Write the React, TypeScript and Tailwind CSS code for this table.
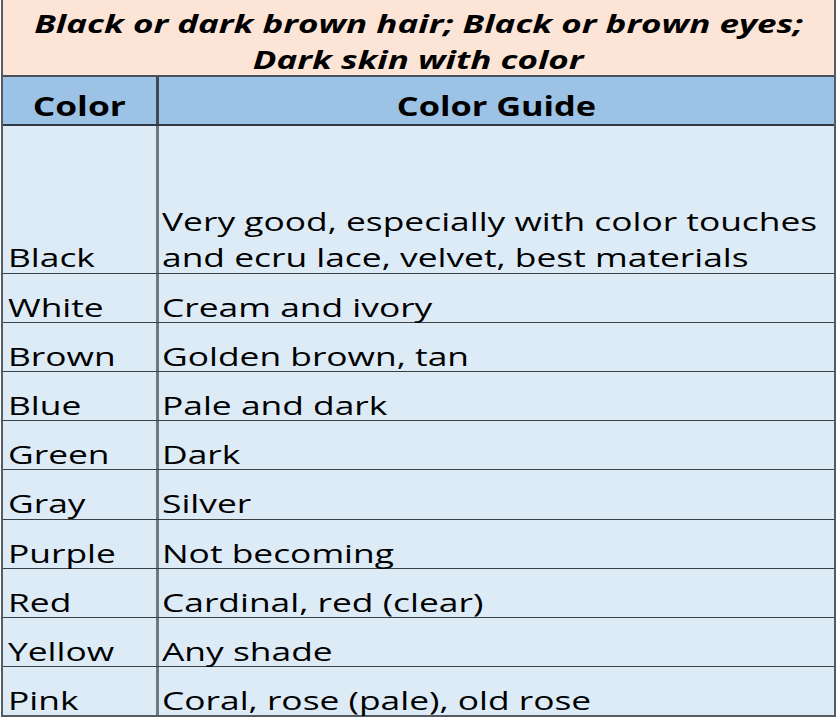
import React from 'react';

const rows: [string, string][] = [
  ['White', 'Cream and ivory'],
  ['Brown', 'Golden brown, tan'],
  ['Blue', 'Pale and dark'],
  ['Green', 'Dark'],
  ['Gray', 'Silver'],
  ['Purple', 'Not becoming'],
  ['Red', 'Cardinal, red (clear)'],
  ['Yellow', 'Any shade'],
  ['Pink', 'Coral, rose (pale), old rose'],
];

// the source picture is stretched sideways, so the text is widened to match
const Wide: React.FC<{ children: React.ReactNode }> = ({ children }) => (
  <span className="inline-block whitespace-nowrap origin-left scale-x-[1.36]">{children}</span>
);

const App: React.FC = () => {
  return (
    <div className="w-[838px] h-[718px] bg-white overflow-hidden font-['Open_Sans',sans-serif] text-black">
      <div className="ml-[1px] w-[835px] h-[717px] border-l-2 border-r-2 border-b-2 border-[#555b62] flex flex-col">
        {/* Title band */}
        <div className="h-[77px] shrink-0 bg-[#fce4d6] border-b-2 border-[#4a5058] flex flex-col items-center justify-center pt-[7px] text-[25px] leading-[36px] font-bold italic">
          <span className="inline-block whitespace-nowrap scale-x-[1.4]">Black or dark brown hair; Black or brown eyes;</span>
          <span className="inline-block whitespace-nowrap scale-x-[1.4]">Dark skin with color</span>
        </div>

        {/* Column headers */}
        <div className="h-[49px] shrink-0 bg-[#9cc2e5] border-b-2 border-[#2f3a45] flex text-[26px] font-bold">
          <div className="w-[156px] border-r-[3px] border-[#3e4a56] flex items-end justify-center">
            <span className="inline-block translate-y-[2px] scale-x-[1.36]">Color</span>
          </div>
          <div className="flex-1 flex items-end justify-center">
            <span className="inline-block translate-y-[2px] scale-x-[1.32]">Color Guide</span>
          </div>
        </div>

        {/* Body */}
        <div className="flex-1 min-h-0 bg-[#ddebf7] flex flex-col text-[26px]">
          <div className="h-[148px] shrink-0 flex border-b border-[#3a3f44] leading-[36px]">
            <div className="w-[156px] border-r-[3px] border-[#6f7780] flex items-end pl-[5px]">
              <div className="translate-y-[2px]"><Wide>Black</Wide></div>
            </div>
            <div className="flex-1 flex flex-col justify-end pl-[3px] translate-y-[2px]">
              <div><Wide>Very good, especially with color touches</Wide></div>
              <div><Wide>and ecru lace, velvet, best materials</Wide></div>
            </div>
          </div>
          {rows.map(([c, g], i) => (
            <div key={c} className={`flex-1 basis-0 min-h-0 flex leading-[26px] ${i < rows.length - 1 ? 'border-b border-[#3a3f44]' : ''}`}>
              <div className="w-[156px] border-r-[3px] border-[#6f7780] flex items-start pl-[5px] pt-[20px]">
                <Wide>{c}</Wide>
              </div>
              <div className="flex-1 flex items-start pl-[3px] pt-[20px]">
                <Wide>{g}</Wide>
              </div>
            </div>
          ))}
        </div>
      </div>
    </div>
  );
};

export default App;
